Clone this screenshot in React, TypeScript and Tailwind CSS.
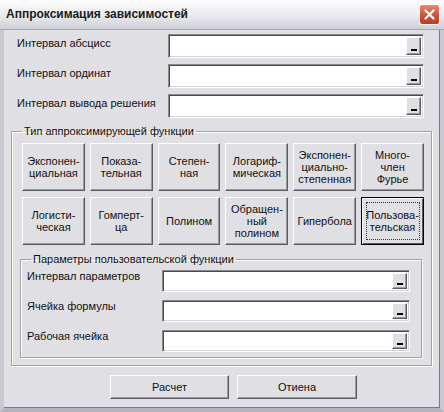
import React from 'react';

const font = { fontFamily: '"Liberation Sans", Arial, sans-serif' };

const raised =
  'border border-t-white border-l-white border-r-[#5a5a60] border-b-[#5a5a60] shadow-[inset_-1px_-1px_0_#9a9aa0] bg-[#e0dfe3]';

const RefEdit: React.FC<{ className: string }> = ({ className }) => (
  <div
    className={`flex justify-end bg-white border border-t-[#8a8a8e] border-l-[#8a8a8e] border-r-white border-b-white shadow-[inset_1px_1px_0_#4a4a4e,inset_-1px_-1px_0_#d4d4d8] p-[2px] ${className}`}
  >
    <div className={`w-[15px] h-full flex items-end justify-center pb-[3px] ${raised}`}>
      <div className="w-[6px] h-[2px] bg-black" />
    </div>
  </div>
);

const funcs: string[][] = [
  ['Экспонен-', 'циальная'],
  ['Показа-', 'тельная'],
  ['Степен-', 'ная'],
  ['Логариф-', 'мическая'],
  ['Экспонен-', 'циально-', 'степенная'],
  ['Много-', 'член', 'Фурье'],
  ['Логисти-', 'ческая'],
  ['Гомперт-', 'ца'],
  ['Полином'],
  ['Обращен-', 'ный', 'полином'],
  ['Гипербола'],
  ['Пользова-', 'тельская'],
];

const App: React.FC = () => {
  return (
    <div
      className="w-[444px] h-[412px] bg-[#e0dfe3] text-[11px] leading-[13px] text-[#111] flex flex-col border-x-4 border-b-4 border-x-[#c9c9d2] border-b-[#b4b4bc] shadow-[inset_-1px_-1px_0_#7a7a84]"
      style={font}
    >
      {/* title bar */}
      <div className="h-[30px] -mx-[4px] flex items-center justify-between pl-[6px] pr-[4px] bg-gradient-to-b from-[#fdfdfe] via-[#ebebf0] to-[#cfcfd8] border-b border-[#a8a8b4]">
        <span className="text-[12px] font-bold text-[#1b1b1b]">Аппроксимация зависимостей</span>
        <div className="w-[21px] h-[21px] rounded-[3px] border border-white bg-gradient-to-b from-[#e88a6e] via-[#d5533a] to-[#c03a22] flex items-center justify-center">
          <svg width="11" height="11" viewBox="0 0 11 11">
            <path d="M1.5 1.5 L9.5 9.5 M9.5 1.5 L1.5 9.5" stroke="white" strokeWidth="2.2" strokeLinecap="round" />
          </svg>
        </div>
      </div>

      {/* top rows */}
      <div className="flex flex-col gap-[6px] pt-[4px]">
        {['Интервал абсцисс', 'Интервал ординат', 'Интервал вывода решения'].map((l) => (
          <div key={l} className="flex h-[24px]">
            <span className="w-[164px] pl-[13px] pt-[3px]">{l}</span>
            <RefEdit className="w-[256px] h-[24px]" />
          </div>
        ))}
      </div>

      {/* outer group */}
      <fieldset className="mt-[7px] ml-[7px] w-[421px] border border-[#a0a0a6] shadow-[1px_1px_0_white,inset_1px_1px_0_white] pb-[7px]">
        <legend className="ml-[10px] px-[2px]">Тип аппроксимирующей функции</legend>
        <div className="grid grid-cols-6 gap-x-[5px] gap-y-[6px] mt-[5px] ml-[10px] w-[402px]">
          {funcs.map((f, i) => {
            const last = i === funcs.length - 1;
            return (
              <div
                key={i}
                className={`h-[48px] flex items-center justify-center text-center leading-[12px] ${
                  last
                    ? 'border border-black bg-[#e0dfe3] shadow-[inset_1px_1px_0_white,inset_-1px_-1px_0_#5a5a60]'
                    : raised
                }`}
              >
                {last ? (
                  <div className="w-[54px] h-[38px] border border-dotted border-[#333] flex flex-col items-center justify-center">
                    {f.map((s) => (
                      <span key={s}>{s}</span>
                    ))}
                  </div>
                ) : (
                  <div className="flex flex-col items-center">
                    {f.map((s) => (
                      <span key={s}>{s}</span>
                    ))}
                  </div>
                )}
              </div>
            );
          })}
        </div>

        {/* inner group */}
        <fieldset className="mt-[8px] ml-[8px] w-[402px] border border-[#a0a0a6] shadow-[1px_1px_0_white,inset_1px_1px_0_white] pb-[5px]">
          <legend className="ml-[10px] px-[2px]">Параметры пользовательской функции</legend>
          <div className="flex flex-col gap-[8px] mt-[4px]">
            {['Интервал параметров', 'Ячейка формулы', 'Рабочая ячейка'].map((l) => (
              <div key={l} className="flex h-[22px]">
                <span className="w-[141px] pl-[6px]">{l}</span>
                <RefEdit className="w-[248px] h-[22px]" />
              </div>
            ))}
          </div>
        </fieldset>
      </fieldset>

      {/* bottom buttons */}
      <div className="flex gap-[8px] mt-[9px] ml-[106px]">
        <div className={`w-[119px] h-[24px] flex items-center justify-center ${raised}`}>Расчет</div>
        <div className={`w-[120px] h-[24px] flex items-center justify-center ${raised}`}>Отиена</div>
      </div>
    </div>
  );
};

export default App;
